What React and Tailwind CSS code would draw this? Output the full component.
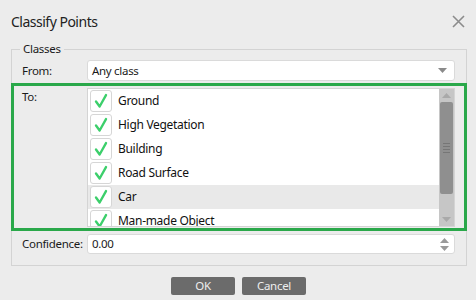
import React from "react";

const classes = [
  { name: "Ground" },
  { name: "High Vegetation" },
  { name: "Building" },
  { name: "Road Surface" },
  { name: "Car", active: true },
  { name: "Man-made Object" },
];

const Check = () => (
  <svg width="22" height="22" viewBox="0 0 22 22">
    <path d="M5.5 11.5 L9.5 17 L16.5 4.5" fill="none" stroke="#3ccf6b" strokeWidth="2.6" strokeLinecap="round" strokeLinejoin="round" />
  </svg>
);

const DownTri = ({ color = "#8a8a8a" }) => (
  <svg width="9" height="5" viewBox="0 0 9 5">
    <path d="M0 0 H9 L4.5 5 Z" fill={color} />
  </svg>
);

const UpTri = ({ color = "#8a8a8a" }) => (
  <svg width="9" height="5" viewBox="0 0 9 5">
    <path d="M0 5 H9 L4.5 0 Z" fill={color} />
  </svg>
);

const App = () => {
  return (
    <div
      className="w-[476px] h-[300px] bg-[#ececec] text-[#1a1a1a] overflow-hidden"
      style={{ fontFamily: '"Noto Sans", "Open Sans", sans-serif' }}
    >
      {/* Title bar */}
      <div className="h-[42px] flex items-center justify-between pl-[11px] pr-[11px]">
        <span className="text-[14px] tracking-[-0.5px] text-[#222]">Classify Points</span>
        <svg width="13" height="13" viewBox="0 0 13 13">
          <path d="M1 1 L12 12 M12 1 L1 12" stroke="#8c8c8c" strokeWidth="1.6" />
        </svg>
      </div>

      {/* Group box */}
      <div className="relative ml-[11px] mt-[7px] w-[456px] h-[217px] border border-[#d3d3d3]">
        <span className="absolute left-[8px] top-[-9px] px-[3px] bg-[#ececec] text-[11.5px] tracking-[-0.3px] leading-[16px]">
          Classes
        </span>

        <div className="pt-[10px] flex flex-col">
          {/* From */}
          <div className="flex items-center h-[21px]">
            <span className="w-[75px] pl-[10px] text-[11.5px] tracking-[-0.3px]">From:</span>
            <div className="w-[368px] h-[21px] bg-white border border-[#dadada] rounded-[3px] flex items-center justify-between pl-[4px] pr-[7px]">
              <span className="text-[11.5px] tracking-[-0.3px]">Any class</span>
              <DownTri />
            </div>
          </div>

          {/* To (highlighted) */}
          <div className="-mx-px mt-[2px] h-[148px] border-[3px] border-[#2aa84a] flex pt-[2px]">
            <span className="w-[73px] pl-[8px] pt-[1px] text-[11.5px] tracking-[-0.3px] leading-[16px]">To:</span>
            <div className="w-[368px] h-[139px] bg-white border border-[#d4d4d4] flex overflow-hidden">
              <div className="flex-1 flex flex-col overflow-hidden">
                {classes.map((c) => (
                  <div
                    key={c.name}
                    className={`h-[24px] shrink-0 flex items-center pl-[2px] ${c.active ? "bg-[#e9e9e9]" : ""}`}
                  >
                    <div className="w-[22px] h-[22px] bg-white border border-[#d6d6d6] rounded-[3px] flex items-center justify-center">
                      <Check />
                    </div>
                    <span className="ml-[6px] text-[12px] tracking-[-0.3px] text-[#111]">{c.name}</span>
                  </div>
                ))}
              </div>
              {/* Scrollbar */}
              <div className="w-[15px] bg-[#c6c6c6] flex flex-col items-center">
                <div className="h-[13px] flex items-center justify-center">
                  <UpTri color="#a9a9a9" />
                </div>
                <div className="w-[13px] h-[92px] bg-[#8f8f8f] rounded-[2px] flex flex-col items-center justify-center gap-[2px]">
                  <div className="w-[7px] h-px bg-[#767676]" />
                  <div className="w-[7px] h-px bg-[#767676]" />
                  <div className="w-[7px] h-px bg-[#767676]" />
                  <div className="w-[7px] h-px bg-[#767676]" />
                </div>
                <div className="flex-1" />
                <div className="h-[13px] flex items-center justify-center">
                  <DownTri color="#a9a9a9" />
                </div>
              </div>
            </div>
          </div>

          {/* Confidence */}
          <div className="flex items-center h-[20px] mt-[3px]">
            <span className="w-[75px] pl-[10px] text-[11.5px] tracking-[-0.3px]">Confidence:</span>
            <div className="w-[368px] h-[20px] bg-white border border-[#dadada] rounded-[3px] flex items-center justify-between pl-[4px] pr-[5px]">
              <span className="text-[11.5px] tracking-[-0.3px]">0.00</span>
              <div className="flex flex-col gap-[3px]">
                <UpTri color="#9a9a9a" />
                <DownTri color="#9a9a9a" />
              </div>
            </div>
          </div>
        </div>
      </div>

      {/* Buttons */}
      <div className="flex justify-center gap-[7px] mt-[11px] pl-[1px]">
        <button className="w-[64px] h-[18px] bg-[#6b6b6b] text-[#eeeeee] text-[11.5px] tracking-[-0.3px] leading-[18px] rounded-[2px]">
          OK
        </button>
        <button className="w-[64px] h-[18px] bg-[#6b6b6b] text-[#eeeeee] text-[11.5px] tracking-[-0.3px] leading-[18px] rounded-[2px]">
          Cancel
        </button>
      </div>
    </div>
  );
};

export default App;
